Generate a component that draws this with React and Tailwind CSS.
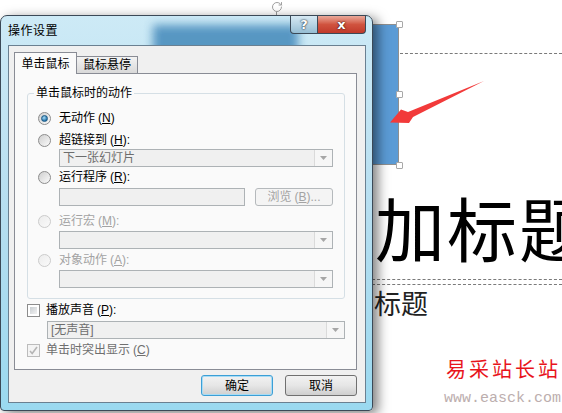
import { RotateCw } from "lucide-react";

const Radio = ({ checked, disabled }) => (
  <span
    className={
      disabled
        ? "w-[13px] h-[13px] rounded-full border border-[#cbcbcb] bg-gradient-to-br from-[#ececec] to-[#fafafa] shrink-0"
        : "w-[13px] h-[13px] rounded-full border border-[#8c8c8c] bg-gradient-to-br from-[#cfcfcf] to-[#fbfbfb] flex items-center justify-center shrink-0"
    }
  >
    {checked && (
      <span className="w-[7px] h-[7px] rounded-full bg-[radial-gradient(circle_at_40%_35%,#a8dcf7,#1a6ba3_75%)] border border-[#1d5a85]" />
    )}
  </span>
);

const Combo = ({ text, className }) => (
  <div
    className={
      "h-[18px] border border-[#adb2b5] bg-[#f0f0f0] flex items-stretch " +
      className
    }
  >
    <span className="flex-1 pl-[3px] text-[12px] leading-[16px] text-[#6d6d6d]">
      {text}
    </span>
    <span className="w-[18px] border-l border-[#dadada] bg-[#f6f6f6] flex items-center justify-center">
      <svg width="7" height="4" viewBox="0 0 7 4">
        <path d="M0 0h7L3.5 4z" fill="#a6a6a6" />
      </svg>
    </span>
  </div>
);

const Key = ({ k }) => (
  <span className="ml-[3px]">
    (<span className="underline">{k}</span>)
  </span>
);

function Dialog() {
  return (
    <div className="absolute left-0 top-[15px] z-10 w-[373px] h-[396px] rounded-t-[7px] rounded-b-[4px] border border-[#3b4957] bg-gradient-to-b from-[#cdeaf6] via-[#b6def0] to-[#9ad9f0] shadow-[5px_3px_12px_rgba(0,0,0,0.5)] overflow-hidden">
      <div className="relative h-[29px] flex justify-between overflow-hidden">
        <div className="absolute left-[152px] top-[9px] w-[145px] h-[34px] bg-[#3a82b6] blur-[5px] opacity-80" />
        <span className="relative self-center pl-[7px] pt-[1px] text-[12px] text-black tracking-[0.5px]">
          操作设置
        </span>
        <div className="relative flex items-start pr-[6px]">
          <div className="w-[28px] h-[18px] border border-t-0 border-[#3b4957] rounded-bl-[4px] bg-gradient-to-b from-[#d6e9f3] via-[#b7d4e4] to-[#95bdd3] flex items-center justify-center text-white font-bold text-[13px] leading-none [text-shadow:0_0_2px_#1c2a38,0_0_1px_#1c2a38] font-['DejaVu_Sans',sans-serif]">
            ?
          </div>
          <div className="w-[48px] h-[18px] border border-t-0 border-l-0 border-[#3b4957] rounded-br-[4px] bg-gradient-to-b from-[#e9a89a] via-[#d0533f] to-[#c0392a] flex items-center justify-center text-white font-bold text-[13px] leading-none [text-shadow:0_0_2px_#3a0c06,0_0_1px_#3a0c06] font-['DejaVu_Sans',sans-serif]">
            x
          </div>
        </div>
      </div>

      <div className="ml-[7px] w-[358px] h-[358px] border border-[#6a8091] bg-[#f0f0f0] pt-[6px] pl-[5px] pr-[8px] text-[12px] text-black">
        <div className="relative z-10 -mb-px flex items-end">
          <div className="w-[63px] h-[22px] border border-b-0 border-[#898c95] bg-[#fafafa] flex items-center justify-center">
            单击鼠标
          </div>
          <div className="w-[61px] h-[18px] border border-l-0 border-[#898c95] bg-gradient-to-b from-[#f3f3f3] to-[#d9d9d9] flex items-center justify-center">
            鼠标悬停
          </div>
        </div>

        <div className="h-[297px] border border-[#898c95] bg-[#fafafa] pt-[19px] pl-[12px] pr-[11px]">
          <div className="relative w-[318px] border border-[#d5dfe5] rounded-[3px] pt-[15px] pl-[10px] pr-[11px] pb-[10px]">
            <span className="absolute -top-[9px] left-[6px] px-[2px] bg-[#fafafa] leading-[16px]">
              单击鼠标时的动作
            </span>
            <div className="h-[18px] flex items-center gap-[8px]">
              <Radio checked />
              <span>
                无动作
                <Key k="N" />
              </span>
            </div>
            <div className="mt-[4px] h-[18px] flex items-center gap-[8px]">
              <Radio />
              <span>
                超链接到
                <Key k="H" />:
              </span>
            </div>
            <Combo text="下一张幻灯片" className="ml-[21px] w-[274px]" />
            <div className="mt-[1px] h-[18px] flex items-center gap-[8px]">
              <Radio />
              <span>
                运行程序
                <Key k="R" />:
              </span>
            </div>
            <div className="mt-[2px] ml-[21px] flex gap-[10px]">
              <div className="w-[186px] h-[18px] border border-[#adb2b5] bg-[#f0f0f0]" />
              <div className="w-[78px] h-[18px] border border-[#b5b9bc] rounded-[3px] bg-[#f4f4f4] text-[#a3a3a3] flex items-center justify-center leading-none">
                浏览
                <Key k="B" />
                ...
              </div>
            </div>
            <div className="mt-[6px] h-[18px] flex items-center gap-[8px] text-[#a3a3a3]">
              <Radio disabled />
              <span>
                运行宏
                <Key k="M" />:
              </span>
            </div>
            <Combo text="" className="mt-[1px] ml-[21px] w-[274px]" />
            <div className="mt-[2px] h-[18px] flex items-center gap-[8px] text-[#a3a3a3]">
              <Radio disabled />
              <span>
                对象动作
                <Key k="A" />:
              </span>
            </div>
            <Combo text="" className="mt-[1px] ml-[21px] w-[274px]" />
          </div>

          <div className="mt-[2px] h-[18px] flex items-center gap-[6px]">
            <span className="w-[13px] h-[13px] border border-[#8c8c8c] bg-white p-[2px]">
              <span className="block w-full h-full bg-gradient-to-br from-[#c9ced2] to-[#f2f2f2]" />
            </span>
            <span>
              播放声音
              <Key k="P" />:
            </span>
          </div>
          <Combo text="[无声音]" className="mt-[2px] ml-[20px] w-[298px]" />
          <div className="mt-[2px] h-[18px] flex items-center gap-[6px] text-[#6f6f6f]">
            <span className="w-[13px] h-[13px] border border-[#bcbcbc] bg-[#f4f4f4] flex items-center justify-center">
              <svg width="9" height="9" viewBox="0 0 9 9">
                <path d="M1 5l2.2 2.5L8 1" stroke="#b5b5b5" strokeWidth="1.6" fill="none" />
              </svg>
            </span>
            <span>
              单击时突出显示
              <Key k="C" />
            </span>
          </div>
        </div>

        <div className="mt-[5px] flex justify-end gap-[12px]">
          <div className="w-[72px] h-[21px] rounded-[3px] border border-[#3c9fd6] bg-gradient-to-b from-[#f2f2f2] via-[#e6e6e6] to-[#cfcfcf] shadow-[inset_0_0_0_1px_#a8dcf5] flex items-center justify-center">
            确定
          </div>
          <div className="w-[72px] h-[21px] rounded-[3px] border border-[#707070] bg-gradient-to-b from-[#f2f2f2] via-[#e6e6e6] to-[#cfcfcf] flex items-center justify-center">
            取消
          </div>
        </div>
      </div>
    </div>
  );
}

export default function App() {
  return (
    <div className="relative w-[562px] h-[413px] overflow-hidden bg-white font-['Liberation_Sans','Noto_Sans_CJK_SC',sans-serif]">
      {/* slide shapes */}
      <div className="absolute left-[155px] top-[24px] w-[244px] h-[141px] bg-[#5b9bd5] border border-[#8f8f8f]" />
      <div className="absolute left-[276px] top-[12px] w-px h-[12px] bg-[#9a9a9a]" />
      <RotateCw className="absolute left-[271px] top-[1px] text-[#a0a0a0]" size={12} strokeWidth={2} />
      <div className="absolute left-[396px] top-[21px] w-[7px] h-[7px] bg-white border border-[#a8a8a8] rounded-[1px]" />
      <div className="absolute left-[396px] top-[91px] w-[7px] h-[7px] bg-white border border-[#a8a8a8] rounded-[1px]" />
      <div className="absolute left-[396px] top-[162px] w-[7px] h-[7px] bg-white border border-[#a8a8a8] rounded-[1px]" />
      <div className="absolute left-[400px] right-0 top-[53px] border-t border-dashed border-[#7a7a7a]" />

      <svg className="absolute left-0 top-0" width="562" height="413">
        <polygon
          points="390,122.5 401,109.5 408,112 484,81 413,117 409,123"
          fill="#f23a3a"
        />
      </svg>

      <div className="absolute left-[375px] top-[192px] text-[70px] leading-none tracking-[2px] text-black whitespace-nowrap font-['Noto_Sans_CJK_SC',serif]">
        加标题
      </div>
      <div className="absolute left-[372px] right-0 top-[279px] border-t border-dashed border-[#7a7a7a]" />
      <div className="absolute left-[372px] right-0 top-[284px] border-t border-dashed border-[#7a7a7a]" />
      <div className="absolute left-[374px] top-[289px] text-[27px] leading-none text-[#222] font-['Noto_Sans_CJK_SC',serif]">
        标题
      </div>

      <div className="absolute left-[446px] top-[359px] text-[20px] leading-none tracking-[3px] text-[#e8141c] font-['Noto_Sans_CJK_SC',sans-serif]">
        易采站长站
      </div>
      <div className="absolute left-[444px] top-[391px] text-[15px] leading-none text-[#bcaeae] whitespace-nowrap font-['Liberation_Mono',monospace]">
        www.easck.com
      </div>

      <Dialog />
    </div>
  );
}
